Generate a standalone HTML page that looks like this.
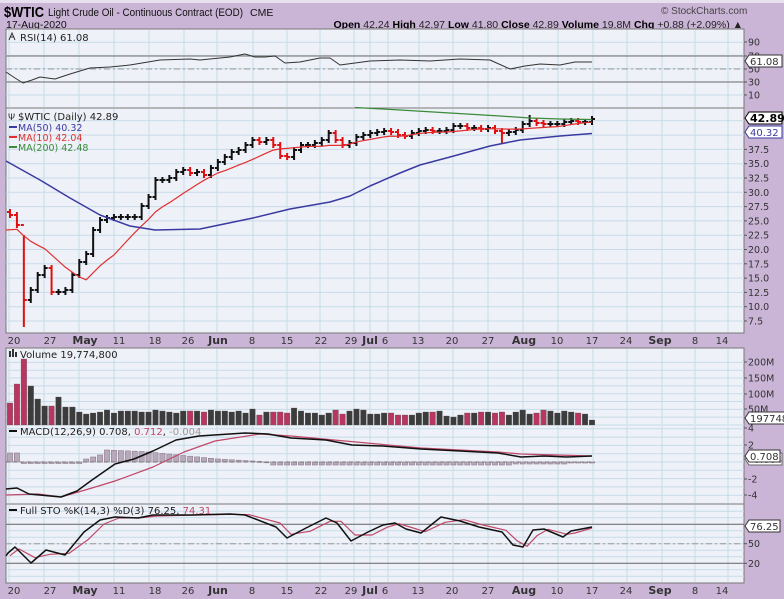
<!DOCTYPE html>
<html><head><meta charset="utf-8">
<style>
html,body{margin:0;padding:0;background:#cbb5d7;width:784px;height:599px;overflow:hidden}
svg{display:block}
text{font-family:"DejaVu Sans","Liberation Sans",sans-serif}
text.l{font-family:"Liberation Sans",sans-serif}
</style></head><body>
<svg id="s" width="784" height="599" xmlns="http://www.w3.org/2000/svg">
<rect x="0" y="0" width="784" height="599" fill="#cbb5d7"/>
<rect x="0" y="0" width="784" height="3" fill="#e8e0ee"/>
<text class="l" x="4" y="17" font-size="15" font-weight="bold" fill="#000" textLength="40" lengthAdjust="spacingAndGlyphs">$WTIC</text>
<text class="l" x="48" y="16" font-size="11" fill="#111" textLength="195" lengthAdjust="spacingAndGlyphs">Light Crude Oil - Continuous Contract (EOD)</text>
<text class="l" x="250" y="16" font-size="10.5" fill="#111">CME</text>
<text class="l" x="6" y="28" font-size="10.5" fill="#111">17-Aug-2020</text>
<text class="l" x="661" y="14" font-size="10" fill="#444">© StockCharts.com</text>
<text class="l" x="743" y="28" text-anchor="end" font-size="10.5" fill="#222"><tspan font-weight="bold" fill="#000">Open</tspan> 42.24 <tspan font-weight="bold" fill="#000">High</tspan> 42.97 <tspan font-weight="bold" fill="#000">Low</tspan> 41.80 <tspan font-weight="bold" fill="#000">Close</tspan> 42.89 <tspan font-weight="bold" fill="#000">Volume</tspan> 19.8M <tspan font-weight="bold" fill="#000">Chg</tspan> +0.88 (+2.09%) ▲</text>
<g id="g"></g>
</svg>
<script>
var NS="http://www.w3.org/2000/svg",G=document.getElementById('g');
function el(t,a,txt){var e=document.createElementNS(NS,t);for(var k in a)e.setAttribute(k,a[k]);if(txt!=null)e.textContent=txt;G.appendChild(e);return e;}
function line(x1,y1,x2,y2,c,w,d){var a={x1:x1,y1:y1,x2:x2,y2:y2,stroke:c,'stroke-width':w||1};if(d)a['stroke-dasharray']=d;return el('line',a);}
function poly(pts,c,w){return el('polyline',{points:pts.map(function(p){return p[0]+','+p[1]}).join(' '),fill:'none',stroke:c,'stroke-width':w||1,'stroke-linejoin':'round'});}
function txt(x,y,s,o){o=o||{};var a={x:x,y:y,'font-size':o.fs||10,fill:o.c||'#222'};if(o.a)a['text-anchor']=o.a;if(o.b)a['font-weight']='bold';return el('text',a,s);}
var L=6,R=744,PF='#eff1f8',GC='#c6dbe8';
var panels=[[29,108],[108,333],[348,425],[425,504],[504,583]];
var vlines=[9,44,79,114,149,184,217,253,287,320,354,370,388,419,453,488,523,558,593,627,662,695,728];
panels.forEach(function(p){el('rect',{x:L,y:p[0],width:R-L,height:p[1]-p[0],fill:PF,stroke:'#777','stroke-width':1});
 vlines.forEach(function(x){line(x,p[0]+1,x,p[1]-1,GC,1);});});
for(var v=10;v<=90;v+=20){var y=95-(v-10)*0.66;line(L,y,R,y,GC,1);}
line(L,56,R,56,'#888',1.2);line(L,82,R,82,'#888',1.2);line(L,69,R,69,'#999',1,'6,3,2,3');
for(var p=7.5;p<=42.5;p+=2.5){var y=321-(p-7.5)*5.72;line(L,y,R,y,GC,1);}
for(var v=0;v<=200;v+=25){var y=425-0.313*v;line(L,y,R,y,GC,1);}
for(var v=-4;v<=4;v+=1){var y=462-v*8.3;line(L,y,R,y,GC,1);}
for(var v=0;v<=100;v+=10){var y=576.3-0.65*v;line(L,y,R,y,GC,1);}
line(L,524.3,R,524.3,'#777',1.2);line(L,563.3,R,563.3,'#777',1.2);line(L,543.7,R,543.7,'#999',1,'6,3,2,3');
var dl=[[14,'20'],[50,'27'],[85,'May',1],[119,'11'],[155,'18'],[188,'26'],[218,'Jun',1],[252,'8'],[287,'15'],[321,'22'],[351,'29'],[370,'Jul',1],[385,'6'],[418,'13'],[452,'20'],[488,'27'],[524,'Aug',1],[557,'10'],[592,'17'],[626,'24'],[660,'Sep',1],[695,'8'],[722,'14']];
[344,594].forEach(function(y){dl.forEach(function(d){txt(d[0],y,d[1],{a:'middle',b:d[2],fs:d[2]?11:10,c:'#333'});});});
var C=[215,225,300,290,275,268,292,292,290,275,262,254,230,220,218,217,217,217,217,206,197,180,180,178,172,170,173,172,175,168,162,157,152,150,145,140,142,140,145,156,157,150,145,145,143,140,133,140,145,143,137,135,133,132,131,132,135,136,133,131,130,131,131,130,126,126,128,128,129,128,131,133,132,130,124,121,123,124,124,124,122,121,122,122,119];
var N=C.length,st=(592-10)/(N-1),X=function(i){return 10+i*st;};
var cols=[];
for(var i=0;i<N;i++){var o=i?C[i-1]:212,c=C[i],x=X(i),up=c<=o,col=up?'#111':'#e01010';cols.push(up);
 var hi=Math.min(o,c)-3,lo=Math.max(o,c)+3;if(i==2){hi=235;lo=327;}if(i==75){hi=115;}if(i==71){lo=143;}
 line(x,hi,x,lo,col,2);line(x-3,o,x,o,col,2);line(x,c,x+3,c,col,2);}
var pre=[232,234,236,236,233,231,229,228,226],all=pre.concat(C),m=[];
for(var i=0;i<N;i++){var s=0;for(var k=0;k<10;k++)s+=all[i+9-k];m.push([X(i),s/10]);}
m[0][0]=6;poly(m,'#e03030',1.2);
poly([[6,161],[40,180],[70,198],[100,215],[130,226],[155,230],[200,229],[253,218],[290,209],[330,202],[350,196],[370,186],[400,173],[420,165],[450,157],[490,146],[520,140],[560,136],[592,133.5]],'#3a3aa0',1.5);
poly([[355,107.5],[400,110],[450,113],[500,116],[530,118],[560,119],[592,119.5]],'#3a8a3a',1.2);
poly([[6,72],[15,78],[23,83],[32,80],[40,77],[55,79],[70,74],[90,68],[110,67],[130,65],[160,60],[190,59],[200,60],[230,57],[245,54],[255,57],[265,57],[275,56],[285,63],[300,62],[320,58],[330,58],[340,65],[355,63],[370,61],[400,60],[430,61],[460,59],[490,60],[510,69],[525,66],[540,64],[560,65],[575,62],[592,62]],'#333',1);
var V=[22,41,66,39,26,19,19,28,18,18,13,11,12,13,15,12,14,14,14,13,13,15,14,13,12,14,14,14,13,15,14,14,13,14,12,16,10,13,13,13,12,17,14,12,12,10,12,15,11,14,16,15,11,11,12,12,10,10,10,12,13,13,14,9,8,10,12,12,13,13,12,13,10,13,15,11,12,15,14,12,14,13,12,11,5];
for(var i=0;i<N;i++){var h=V[i]||12;el('rect',{x:X(i)-2.8,y:425-h,width:5.6,height:h,fill:cols[i]?'#3c3c3c':'#b8365f',stroke:'#555','stroke-width':0.3});}
for(var i=0;i<N;i++){var x=X(i),h;
 if(i<2)h=9;else if(i<11)h=-1.5;else if(i<14)h=3+(i-11)*2;else if(i<20)h=12-(i-14)*0.3;else if(i<30)h=10-(i-20)*0.7;else if(i<38)h=3-(i-30)*0.4;else h=-3+(i>72?1:0)+(i>80?1:0);
 var y0=462,y1=462-h;el('rect',{x:x-2.6,y:Math.min(y0,y1),width:5.2,height:Math.max(1,Math.abs(h)),fill:'#b7a9ba',stroke:'#8e7f92','stroke-width':0.6});}
line(L,462,595,462,'#777',1,'4,3');
poly([[6,495],[38,494],[61,497],[92,488],[115,481],[153,467],[184,452],[215,441],[260,434],[291,436],[345,441],[421,448],[498,452],[521,454],[592,456]],'#c04868',1.2);
poly([[6,489],[17,488],[29,494],[61,497],[77,491],[92,480],[115,464],[134,459],[153,451],[176,440],[199,436],[245,433],[268,434],[291,438],[326,440],[352,445],[383,446],[421,449],[460,451],[498,453],[521,457],[544,456],[567,457],[592,456]],'#111',1.5);
var K=[[6,556],[8,553],[15,547],[31,563],[46,550],[65,555],[84,532],[100,520],[115,517],[138,518],[153,515],[192,515],[230,514],[245,515],[276,527],[287,538],[306,528],[326,518],[337,523],[351,541],[368,532],[383,525],[395,523],[406,529],[421,533],[441,517],[460,521],[479,527],[502,532],[513,545],[523,547],[533,530],[544,529],[563,537],[571,531],[592,527]];
poly(K.map(function(p,i){var q=K[Math.max(0,i-1)];return [p[0]+4,(p[1]*2+q[1])/3];}).slice(0,-1).concat([[592,528]]),'#c04868',1.2);
poly(K,'#111',1.5);
txt(20,41,'RSI(14) 61.08',{fs:10});el('path',{d:'M9 40 L12 33 L15 40 M10 37 L14 37',stroke:'#333',fill:'none'});
txt(18,120,'$WTIC (Daily) 42.89',{fs:10});txt(8,120,'\u03a8',{fs:9,c:'#333'});
line(9,127,17,127,'#3a3aa0',2);txt(18,131,'MA(50) 40.32',{fs:9.5,c:'#3a3aa0'});
line(9,137,17,137,'#e03030',2);txt(18,141,'MA(10) 42.04',{fs:9.5,c:'#e03030'});
line(9,147,17,147,'#3a8a3a',2);txt(18,151,'MA(200) 42.48',{fs:9.5,c:'#3a8a3a'});
el('rect',{x:9,y:351,width:2,height:6,fill:'#333'});el('rect',{x:12,y:349,width:2,height:8,fill:'#333'});el('rect',{x:15,y:352,width:2,height:5,fill:'#333'});
txt(20,358,'Volume 19,774,800',{fs:10});
line(9,431,17,431,'#111',2);
var t=txt(20,435,'',{fs:10});t.innerHTML='MACD(12,26,9) 0.708, <tspan fill="#c04868">0.712</tspan>, <tspan fill="#999">-0.004</tspan>';
line(9,510,17,510,'#111',2);
var t2=txt(20,514,'',{fs:10});t2.innerHTML='Full STO %K(14,3) %D(3) 76.25, <tspan fill="#c04868">74.31</tspan>';
function ax(y,s){txt(748,y+3.5,s,{fs:9.5,c:'#333'});line(744,y,747,y,'#555',1);}
[[90,42],[70,56],[50,69],[30,82],[10,95]].forEach(function(a){ax(a[1],''+a[0]);});
for(var p=7.5;p<=37.5;p+=2.5){ax(321-(p-7.5)*5.72,p.toFixed(1));}
[[200,362],[150,378],[100,394],[50,409]].forEach(function(a){ax(a[1],a[0]+'M');});
[[4,428],[2,445],[-2,479],[-4,495]].forEach(function(a){ax(a[1],''+a[0]);});
[[50,543.7],[20,563.3]].forEach(function(a){ax(a[1],''+a[0]);});
function box(y,s,c,b,w){el('path',{d:'M745 '+y+' l4 -6 h'+w+' v12 h-'+w+' z',fill:'#fff',stroke:c,'stroke-width':1});txt(750,y+4,s,{fs:b?11:10,c:c,b:b});}
box(61,'61.08','#333',0,33);
box(132,'40.32','#3a3aa0',0,33);
box(118,'42.89','#000',1,33);
box(418,'19774800','#333',0,40);
box(459,'-0.004','#666',0,33);
box(456,'0.708','#333',0,31);
box(526,'76.25','#333',0,31);
</script>
</body></html>
